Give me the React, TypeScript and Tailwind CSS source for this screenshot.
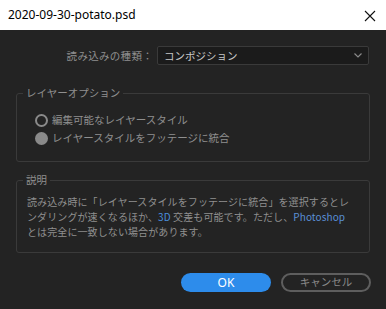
const FONT = "font-['Noto_Sans_CJK_JP','Noto_Sans',sans-serif]";

function Radio({ checked, label }: { checked?: boolean; label: string }) {
  return (
    <div className="flex items-center h-[18px]">
      {checked ? (
        <span className="w-[13px] h-[13px] rounded-full bg-[#8a8a8a]" />
      ) : (
        <span className="w-[13px] h-[13px] rounded-full border-2 border-[#8a8a8a]" />
      )}
      <span className="ml-[4px] text-[10.5px] text-[#8f8f8f]">{label}</span>
    </div>
  );
}

export default function App() {
  return (
    <div className={`w-[386px] h-[309px] bg-[#232323] flex flex-col ${FONT}`}>
      <div className="h-[30px] bg-white flex items-center justify-between pl-[8px] pr-[10px]">
        <span className="text-[12px] text-[#000] font-['Noto_Sans',sans-serif]">2020-09-30-potato.psd</span>
        <svg width="12" height="12" viewBox="0 0 12 12" className="mt-[1px]">
          <path d="M1 1 L11 11 M11 1 L1 11" stroke="#111" strokeWidth="1.1" />
        </svg>
      </div>

      <div className="flex items-center mt-[16px] pr-[17px]">
        <span className="w-[153px] text-right text-[10.5px] text-[#8f8f8f] tracking-[0.3px]">
          読み込みの種類：
        </span>
        <div className="ml-[4px] flex-1 h-[19px] bg-[#1b1b1b] border border-[#3a3a3a] rounded-[2px] flex items-center justify-between pl-[6px] pr-[6px]">
          <span className="text-[10.5px] text-[#c8c8c8]">コンポジション</span>
          <svg width="8" height="5" viewBox="0 0 8 5">
            <path d="M0.5 0.5 L4 4 L7.5 0.5" stroke="#8a8a8a" strokeWidth="1.2" fill="none" />
          </svg>
        </div>
      </div>

      <fieldset className="mx-[16px] mt-[21px] h-[76px] border border-[#3a3a3a] rounded-[3px]">
        <legend className="ml-[6px] px-[3px] text-[10.5px] text-[#8f8f8f] leading-[14px]">レイヤーオプション</legend>
        <div className="pl-[18px] pt-[11px]">
          <Radio label="編集可能なレイヤースタイル" />
          <Radio checked label="レイヤースタイルをフッテージに統合" />
        </div>
      </fieldset>

      <fieldset className="mx-[16px] mt-[11px] h-[80px] border border-[#3a3a3a] rounded-[3px]">
        <legend className="ml-[6px] px-[3px] text-[10.5px] text-[#8f8f8f] leading-[14px]">説明</legend>
        <div className="pl-[10px] pt-[7px] text-[10px] leading-[15px] text-[#8f8f8f] whitespace-nowrap tracking-[0.1px]">
          <div>読み込み時に「レイヤースタイルをフッテージに統合」を選択するとレ</div>
          <div>
            ンダリングが速くなるほか、<span className="text-[#4a8edb]">3D</span> 交差も可能です。ただし、
            <span className="text-[#5a8fd6]">Photoshop</span>
          </div>
          <div>とは完全に一致しない場合があります。</div>
        </div>
      </fieldset>

      <div className="flex justify-end gap-[10px] mt-[20px] pr-[15px]">
        <button className="w-[90px] h-[19px] rounded-full bg-[#2d8ceb] text-white text-[12px] leading-none font-['Noto_Sans',sans-serif]">
          OK
        </button>
        <button className="w-[90px] h-[19px] rounded-full border-2 border-[#5e5e5e] text-[#8a8a8a] text-[10.5px] leading-none">
          キャンセル
        </button>
      </div>
    </div>
  );
}
